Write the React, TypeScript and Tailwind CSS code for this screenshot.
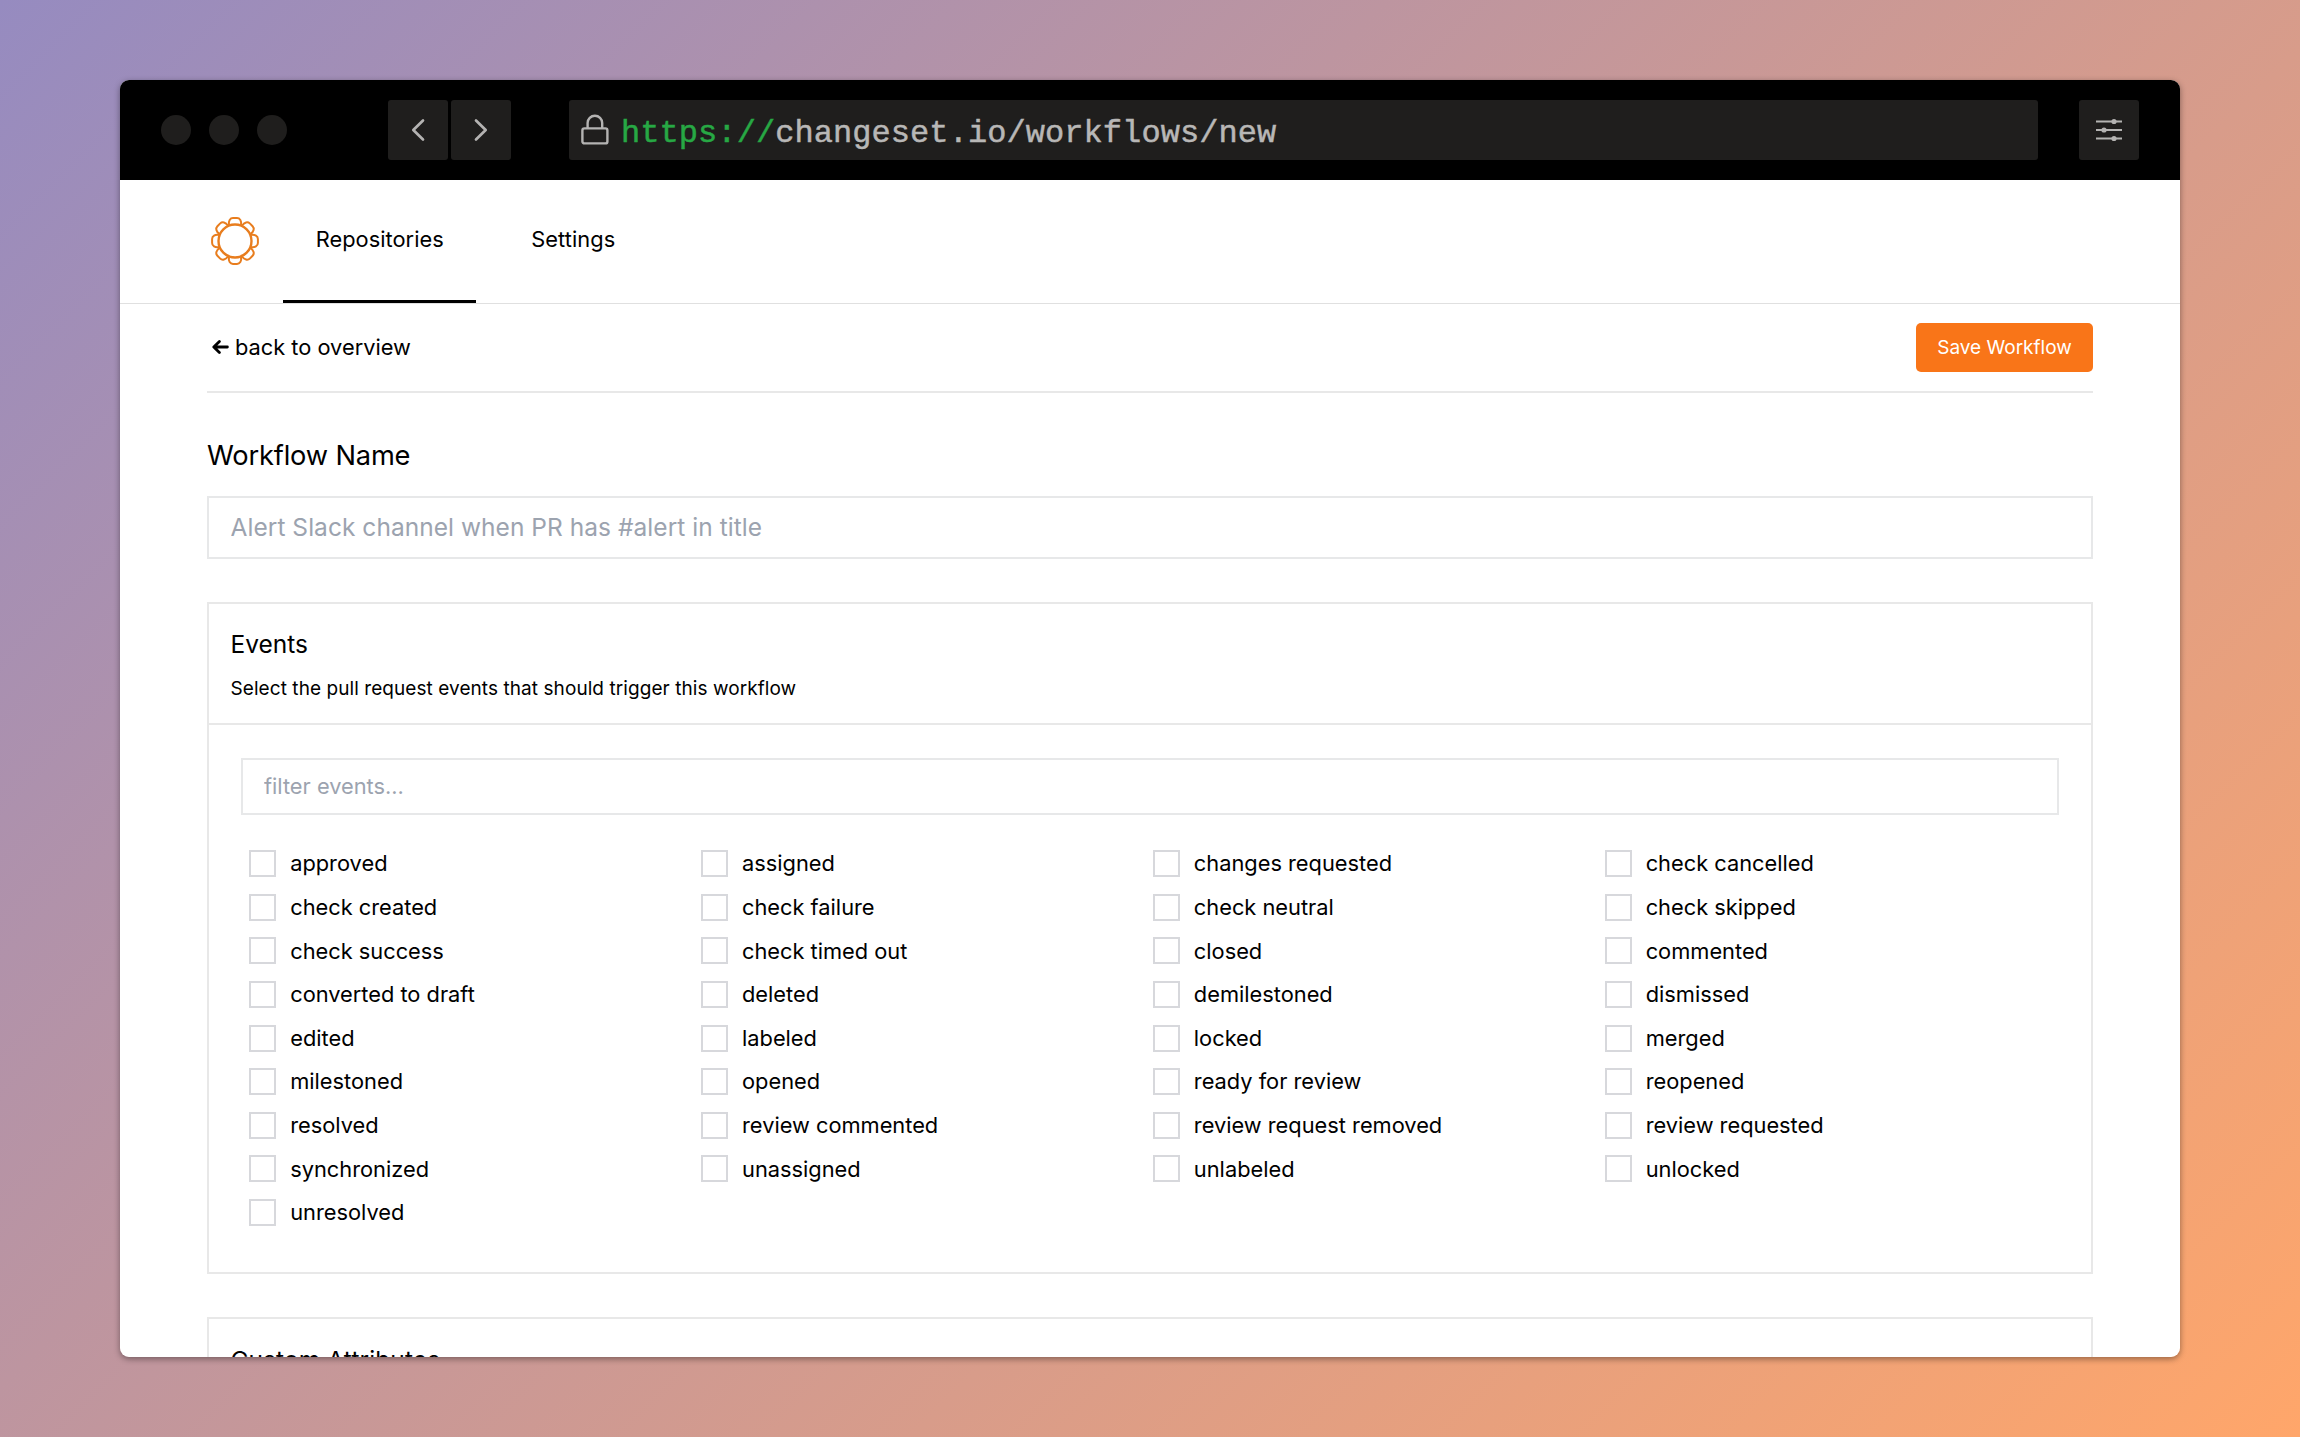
import React from "react";

const events = [
  "approved", "assigned", "changes requested", "check cancelled",
  "check created", "check failure", "check neutral", "check skipped",
  "check success", "check timed out", "closed", "commented",
  "converted to draft", "deleted", "demilestoned", "dismissed",
  "edited", "labeled", "locked", "merged",
  "milestoned", "opened", "ready for review", "reopened",
  "resolved", "review commented", "review request removed", "review requested",
  "synchronized", "unassigned", "unlabeled", "unlocked",
  "unresolved",
];

function Logo() {
  return (
    <svg className="h-[52px] w-[52px]" viewBox="-26 -26 52 52" fill="none" stroke="#e87d1e" strokeWidth="2" strokeLinejoin="round">
      <circle r="16.5" strokeWidth="2.4" />
      {[0, 45, 90, 135, 180, 225, 270, 315].map((a) => (
        <path key={a} transform={`rotate(${a})`} d="M-6 -16 C-6.8 -20 -4.8 -22.9 -2 -22.9 H2 C4.8 -22.9 6.8 -20 6 -16" />
      ))}
    </svg>
  );
}

function Chevron({ flip }: { flip?: boolean }) {
  return (
    <svg className="h-6 w-6" viewBox="0 0 24 24" fill="none" stroke="#b4b3b2" strokeWidth="2.7" strokeLinecap="round" strokeLinejoin="round">
      <path d={flip ? "M7 2.5 L16.7 12 L7 21.5" : "M17 2.5 L7.3 12 L17 21.5"} />
    </svg>
  );
}

function TitleBar() {
  return (
    <header className="flex h-[100px] shrink-0 items-center bg-black pr-[41px] pl-[41px]">
      <div className="flex gap-[18px]">
        <span className="size-[30px] rounded-full bg-[#1f1e1d]" />
        <span className="size-[30px] rounded-full bg-[#1f1e1d]" />
        <span className="size-[30px] rounded-full bg-[#1f1e1d]" />
      </div>
      <div className="ml-[101px] flex gap-[3px]">
        <button className="flex size-[60px] items-center justify-center rounded-[3px] bg-[#1f1e1d]"><Chevron /></button>
        <button className="flex size-[60px] items-center justify-center rounded-[3px] bg-[#1f1e1d]"><Chevron flip /></button>
      </div>
      <div className="ml-[58px] flex h-[60px] flex-1 items-center rounded-[3px] bg-[#1f1e1d] pl-[12px]">
        <svg className="h-[32px] w-[28px] shrink-0" viewBox="0 0 28 32" fill="none" stroke="#b4b3b2" strokeWidth="2.4">
          <rect x="1.4" y="14.4" width="25" height="15" rx="2" />
          <path d="M6.6 14.4 V9 a7.3 7.3 0 0 1 14.6 0 V14.4" />
        </svg>
        <span className="ml-[12px] pt-[7px] font-['Liberation_Mono',monospace] text-[32px] leading-[40px] tracking-[0.07px] text-[#b8b7b6] [-webkit-text-stroke:0.5px]">
          <span className="text-[#27a844]">https://</span>changeset.io/workflows/new
        </span>
      </div>
      <button className="ml-[41px] flex size-[60px] items-center justify-center rounded-[3px] bg-[#1f1e1d]">
        <svg className="h-[24px] w-[26px]" viewBox="0 0 26 24" stroke="#b4b3b2" strokeWidth="2" fill="#b4b3b2">
          <path d="M0 3.5 H26 M0 12 H26 M0 20.5 H26" />
          <g stroke="none">
            <circle cx="18" cy="3.5" r="2.6" />
            <circle cx="8" cy="12" r="2.6" />
            <circle cx="18" cy="20.5" r="2.6" />
          </g>
        </svg>
      </button>
    </header>
  );
}

export default function App() {
  return (
    <div className="h-[1437px] w-[2300px] overflow-hidden bg-[linear-gradient(135deg,#968bc0_0%,#ffa66a_100%)] px-[120px] pt-[80px] font-['Inter',sans-serif] text-[21.8px] text-black">
      <div className="h-[1277px] rounded-[9px] shadow-[0_2px_6px_rgba(0,0,0,0.4)]">
        <div className="flex h-full flex-col overflow-hidden rounded-[9px] bg-white">
          <TitleBar />
          <nav className="flex h-[124px] shrink-0 border-b border-[#e0e0e0] pl-[88.7px]">
            <div className="flex w-[74.6px] pt-[35px]"><Logo /></div>
            <a className="flex w-[193px] justify-center border-b-[3px] border-black pt-[43px] leading-[33px] tracking-[0.03px]">Repositories</a>
            <a className="ml-[22px] flex w-[150px] justify-center pt-[43px] leading-[33px] tracking-[0.1px]">Settings</a>
          </nav>
          <main className="flex flex-col px-[87px]">
            <div className="flex h-[88.5px] shrink-0 items-center justify-between border-b-2 border-[#e8e8e8]">
              <a className="flex items-center leading-[33px]">
                <svg className="mr-[6px] ml-[5px] h-[16px] w-[17px]" viewBox="0 0 17 16" fill="none" stroke="black" strokeWidth="2.8" strokeLinecap="round" strokeLinejoin="round">
                  <path d="M15.4 8 H2 M7.4 2.4 L1.8 8 L7.4 13.6" />
                </svg>
                back to overview
              </a>
              <button className="h-[49px] w-[177px] rounded-[5px] bg-[#f97518] pt-[1px] text-[19px] text-white">Save Workflow</button>
            </div>
            <h1 className="mt-[44px] text-[27.25px] leading-[38px] tracking-[-0.17px]">Workflow Name</h1>
            <input className="mt-[21.5px] h-[63px] border-2 border-[#e7e8e9] px-[21.5px] pb-[2px] text-[24.5px] tracking-[0.04px] placeholder:text-[#9ca3af]" placeholder="Alert Slack channel when PR has #alert in title" />
            <section className="mt-[43px] flex h-[672px] shrink-0 flex-col border-2 border-[#e8e8e8]">
              <div className="h-[121px] border-b-2 border-[#e8e8e8] px-[21.5px] pt-[21px]">
                <h2 className="text-[24.5px] leading-[38px]">Events</h2>
                <p className="mt-[12px] text-[19px] leading-[27px] tracking-[0.07px]">Select the pull request events that should trigger this workflow</p>
              </div>
              <div className="flex flex-col px-[32px] pt-[33px]">
                <input className="h-[57px] border-2 border-[#e7e8e9] px-[21px] pb-[2px] text-[21.8px] placeholder:text-[#9ca3af]" placeholder="filter events..." />
                <div className="mt-[27px] mr-[2.5px] ml-[8.2px] grid auto-rows-[43.6px] grid-cols-4">
                  {events.map((e) => (
                    <label key={e} className="flex items-center">
                      <input type="checkbox" className="size-[27px] appearance-none border-2 border-[#d7d8dc] bg-white" />
                      <span className="ml-[14px]">{e}</span>
                    </label>
                  ))}
                </div>
              </div>
            </section>
            <section className="mt-[43px] h-[300px] shrink-0 border-2 border-[#e8e8e8] px-[21.5px] pt-[22px]">
              <h2 className="text-[24.5px] leading-[38px] tracking-[0.1px]">Custom Attributes</h2>
            </section>
          </main>
        </div>
      </div>
    </div>
  );
}
